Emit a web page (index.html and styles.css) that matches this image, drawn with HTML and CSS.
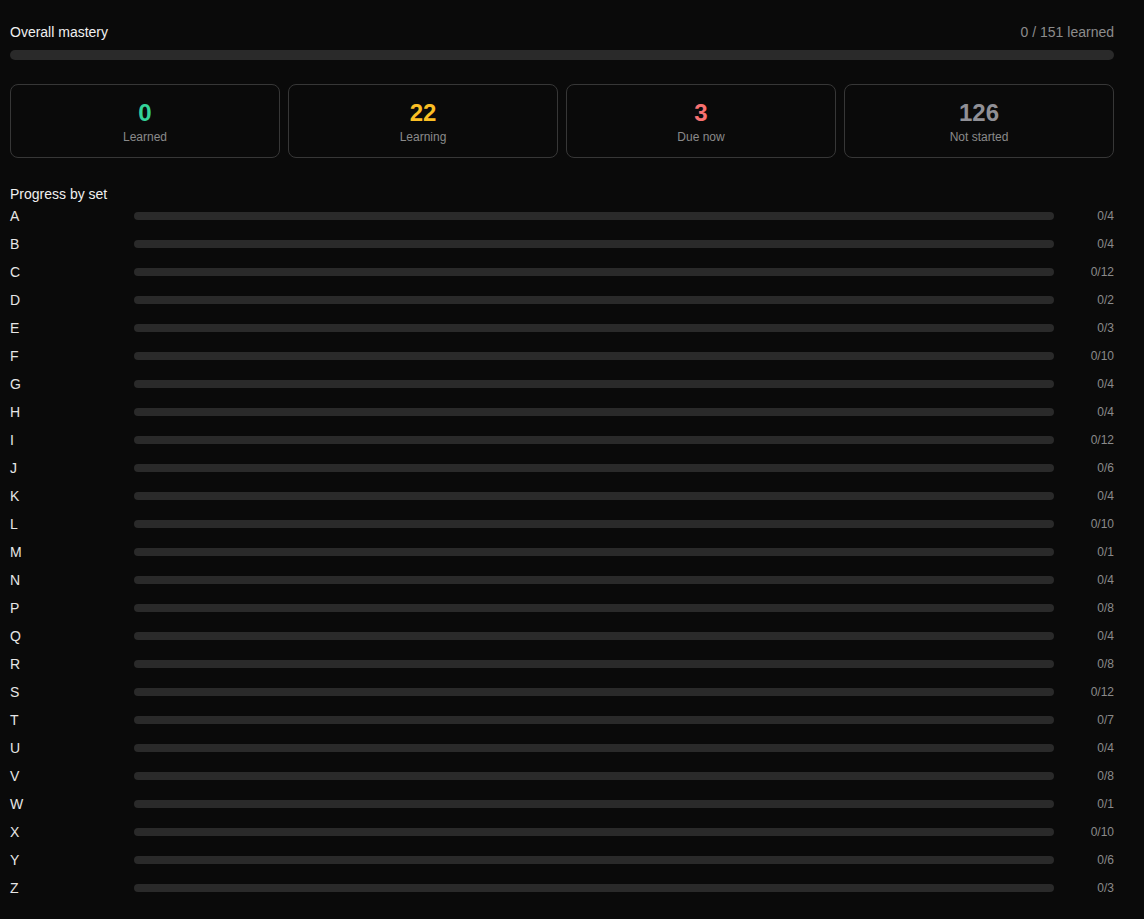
FILE: index.html
```html
<!DOCTYPE html>
<html lang="en">
<head>
<meta charset="utf-8">
<title>Progress</title>
<link rel="stylesheet" href="styles.css">
</head>
<body>
<main class="page">
  <section class="overall">
    <div class="overall-head">
      <span class="overall-title">Overall mastery</span>
      <span class="overall-count">0 / 151 learned</span>
    </div>
    <div class="track track-lg"><div class="fill" style="width:0%"></div></div>
  </section>

  <section class="stats">
    <div class="stat"><div class="stat-num learned">0</div><div class="stat-label">Learned</div></div>
    <div class="stat"><div class="stat-num learning">22</div><div class="stat-label">Learning</div></div>
    <div class="stat"><div class="stat-num due">3</div><div class="stat-label">Due now</div></div>
    <div class="stat"><div class="stat-num notstarted">126</div><div class="stat-label">Not started</div></div>
  </section>

  <section class="sets">
    <div class="sets-title">Progress by set</div>
    <div class="set-row"><span class="set-name">A</span><div class="track"><div class="fill" style="width:0%"></div></div><span class="set-count">0/4</span></div>
    <div class="set-row"><span class="set-name">B</span><div class="track"><div class="fill" style="width:0%"></div></div><span class="set-count">0/4</span></div>
    <div class="set-row"><span class="set-name">C</span><div class="track"><div class="fill" style="width:0%"></div></div><span class="set-count">0/12</span></div>
    <div class="set-row"><span class="set-name">D</span><div class="track"><div class="fill" style="width:0%"></div></div><span class="set-count">0/2</span></div>
    <div class="set-row"><span class="set-name">E</span><div class="track"><div class="fill" style="width:0%"></div></div><span class="set-count">0/3</span></div>
    <div class="set-row"><span class="set-name">F</span><div class="track"><div class="fill" style="width:0%"></div></div><span class="set-count">0/10</span></div>
    <div class="set-row"><span class="set-name">G</span><div class="track"><div class="fill" style="width:0%"></div></div><span class="set-count">0/4</span></div>
    <div class="set-row"><span class="set-name">H</span><div class="track"><div class="fill" style="width:0%"></div></div><span class="set-count">0/4</span></div>
    <div class="set-row"><span class="set-name">I</span><div class="track"><div class="fill" style="width:0%"></div></div><span class="set-count">0/12</span></div>
    <div class="set-row"><span class="set-name">J</span><div class="track"><div class="fill" style="width:0%"></div></div><span class="set-count">0/6</span></div>
    <div class="set-row"><span class="set-name">K</span><div class="track"><div class="fill" style="width:0%"></div></div><span class="set-count">0/4</span></div>
    <div class="set-row"><span class="set-name">L</span><div class="track"><div class="fill" style="width:0%"></div></div><span class="set-count">0/10</span></div>
    <div class="set-row"><span class="set-name">M</span><div class="track"><div class="fill" style="width:0%"></div></div><span class="set-count">0/1</span></div>
    <div class="set-row"><span class="set-name">N</span><div class="track"><div class="fill" style="width:0%"></div></div><span class="set-count">0/4</span></div>
    <div class="set-row"><span class="set-name">P</span><div class="track"><div class="fill" style="width:0%"></div></div><span class="set-count">0/8</span></div>
    <div class="set-row"><span class="set-name">Q</span><div class="track"><div class="fill" style="width:0%"></div></div><span class="set-count">0/4</span></div>
    <div class="set-row"><span class="set-name">R</span><div class="track"><div class="fill" style="width:0%"></div></div><span class="set-count">0/8</span></div>
    <div class="set-row"><span class="set-name">S</span><div class="track"><div class="fill" style="width:0%"></div></div><span class="set-count">0/12</span></div>
    <div class="set-row"><span class="set-name">T</span><div class="track"><div class="fill" style="width:0%"></div></div><span class="set-count">0/7</span></div>
    <div class="set-row"><span class="set-name">U</span><div class="track"><div class="fill" style="width:0%"></div></div><span class="set-count">0/4</span></div>
    <div class="set-row"><span class="set-name">V</span><div class="track"><div class="fill" style="width:0%"></div></div><span class="set-count">0/8</span></div>
    <div class="set-row"><span class="set-name">W</span><div class="track"><div class="fill" style="width:0%"></div></div><span class="set-count">0/1</span></div>
    <div class="set-row"><span class="set-name">X</span><div class="track"><div class="fill" style="width:0%"></div></div><span class="set-count">0/10</span></div>
    <div class="set-row"><span class="set-name">Y</span><div class="track"><div class="fill" style="width:0%"></div></div><span class="set-count">0/6</span></div>
    <div class="set-row"><span class="set-name">Z</span><div class="track"><div class="fill" style="width:0%"></div></div><span class="set-count">0/3</span></div>
  </section>
</main>
</body>
</html>
```

FILE: styles.css
```css
html, body {
  margin: 0;
  padding: 0;
  background: #0a0a0a;
  color: #ececec;
  font-family: "Liberation Sans", Arial, sans-serif;
  font-size: 14px;
}

.page {
  padding: 24px 30px 16px 10px;
}

.overall-head {
  display: flex;
  justify-content: space-between;
  align-items: center;
  line-height: 16px;
}

.overall-title {
  color: #f0f0f0;
}

.overall-count {
  color: #8c8c8c;
}

.track {
  background: #2a2a2a;
  border-radius: 4px;
  height: 8px;
  overflow: hidden;
}

.track-lg {
  margin-top: 10px;
  height: 10px;
  border-radius: 5px;
}

.fill {
  height: 100%;
  background: #34d399;
}

.stats {
  display: grid;
  grid-template-columns: repeat(4, 1fr);
  gap: 8px;
  margin-top: 24px;
}

.stat {
  border: 1px solid #373737;
  border-radius: 8px;
  padding: 14px 12px 12px;
  text-align: center;
}

.stat-num {
  font-size: 24px;
  font-weight: 700;
  line-height: 28px;
}

.stat-label {
  margin-top: 2px;
  font-size: 12px;
  line-height: 16px;
  color: #8a8a8a;
}

.learned { color: #34d399; }
.learning { color: #fbbf24; }
.due { color: #f87171; }
.notstarted { color: #909096; }

.sets {
  margin-top: 28px;
}

.sets-title {
  line-height: 16px;
  color: #f0f0f0;
}

.set-row {
  display: grid;
  grid-template-columns: 124px 1fr 60px;
  align-items: center;
  height: 28px;
}

.set-name {
  line-height: 16px;
  color: #e6e6e6;
}

.set-count {
  text-align: right;
  font-size: 12px;
  color: #8a8a8a;
}
```
